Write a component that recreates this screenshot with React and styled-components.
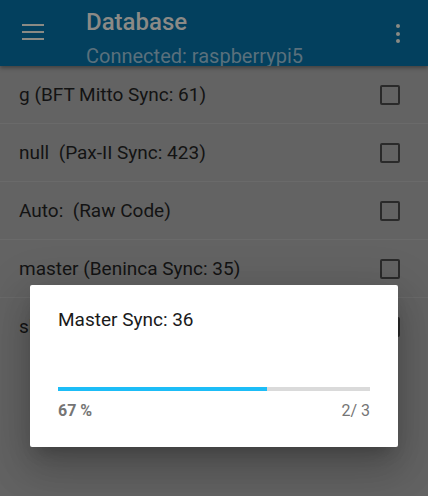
import React from 'react';
import styled, { createGlobalStyle } from 'styled-components';

const GlobalStyle = createGlobalStyle`
  body {
    margin: 0;
    font-family: Roboto, "Liberation Sans", sans-serif;
    background: #636363;
  }
`

const Screen = styled.div`
  position: relative;
  width: 428px;
  height: 496px;
  overflow: hidden;
  background: #636363;
`
const AppBar = styled.div`
  position: relative;
  z-index: 1;
  display: flex;
  flex-direction: row;
  height: 66px;
  overflow: hidden;
  background: #03405e;
  box-shadow: 0 2px 4px rgba(0, 0, 0, 0.35);
`
const MenuButton = styled.div`
  width: 86px;
  padding: 24px 0 0 22px;
  box-sizing: border-box;
  display: flex;
  flex-direction: column;
  gap: 5px;
`
const MenuLine = styled.span`
  display: block;
  width: 22px;
  height: 2px;
  background: #8a8a84;
`
const TitleBlock = styled.div`
  flex: 1;
  display: flex;
  flex-direction: column;
  padding-top: 8px;
`
const Title = styled.div`
  font-size: 24px;
  line-height: 28px;
  font-weight: 500;
  color: #8b8a86;
`
const Subtitle = styled.div`
  margin-top: 8px;
  font-size: 20px;
  line-height: 24px;
  color: #5a707c;
  white-space: nowrap;
`
const Kebab = styled.div`
  width: 54px;
  padding: 24px 0 0 22px;
  box-sizing: border-box;
  display: flex;
  flex-direction: column;
  gap: 3.5px;
`
const Dot = styled.span`
  display: block;
  width: 4px;
  height: 4px;
  border-radius: 50%;
  background: #8a8a84;
`
const List = styled.div`
  display: flex;
  flex-direction: column;
`
const Row = styled.div`
  display: flex;
  align-items: center;
  justify-content: space-between;
  height: 57px;
  padding: 0 28px 0 19px;
  border-bottom: 1px solid ${(p) => (p.$last ? 'transparent' : '#6a6a6a')};
  font-size: 19px;
  color: #131313;
`
const RowLabel = styled.span`
  white-space: pre;
`
const Checkbox = styled.span`
  width: 20px;
  height: 20px;
  box-sizing: border-box;
  border: 2px solid #2a2a2a;
  border-radius: 2px;
`
const Backdrop = styled.div`
  position: absolute;
  inset: 0;
  z-index: 2;
  display: flex;
  justify-content: center;
  align-items: flex-start;
  padding-top: 285px;
`
const Dialog = styled.div`
  width: 368px;
  box-sizing: border-box;
  padding: 23px 28px 26px;
  background: #fff;
  border-radius: 2px;
  box-shadow: 0 11px 15px -7px rgba(0, 0, 0, 0.2), 0 24px 38px 3px rgba(0, 0, 0, 0.14), 0 9px 46px 8px rgba(0, 0, 0, 0.12);
`
const DialogTitle = styled.div`
  font-size: 19px;
  line-height: 24px;
  color: #1a1a1a;
`
const Track = styled.div`
  margin-top: 55px;
  height: 4px;
  background: #dadada;
`
const Fill = styled.div`
  height: 100%;
  background: #1dbdf7;
`
const Labels = styled.div`
  display: flex;
  justify-content: space-between;
  margin-top: 10px;
  font-size: 16px;
  line-height: 20px;
  color: #757575;
`
const Percent = styled.span`
  font-weight: 700;
`

const rows = [
  'g (BFT Mitto Sync: 61)',
  'null  (Pax-II Sync: 423)',
  'Auto:  (Raw Code)',
  'master (Beninca Sync: 35)',
  'slave (Beninca Sync: 35)',
]

const App = () => {
  const done = 2
  const total = 3
  const pct = Math.round((done / total) * 100)
  return (
    <Screen>
      <GlobalStyle />
      <AppBar>
        <MenuButton>
          <MenuLine /><MenuLine /><MenuLine />
        </MenuButton>
        <TitleBlock>
          <Title>Database</Title>
          <Subtitle>Connected: raspberrypi5</Subtitle>
        </TitleBlock>
        <Kebab>
          <Dot /><Dot /><Dot />
        </Kebab>
      </AppBar>
      <List>
        {rows.map((r, i) => (
          <Row key={r} $last={i === rows.length - 1}>
            <RowLabel>{r}</RowLabel>
            <Checkbox />
          </Row>
        ))}
      </List>
      <Backdrop>
        <Dialog>
          <DialogTitle>Master Sync: 36</DialogTitle>
          <Track>
            <Fill style={{ width: `${pct}%` }} />
          </Track>
          <Labels>
            <Percent>{pct} %</Percent>
            <span>{done}/ {total}</span>
          </Labels>
        </Dialog>
      </Backdrop>
    </Screen>
  )
}

export default App;
